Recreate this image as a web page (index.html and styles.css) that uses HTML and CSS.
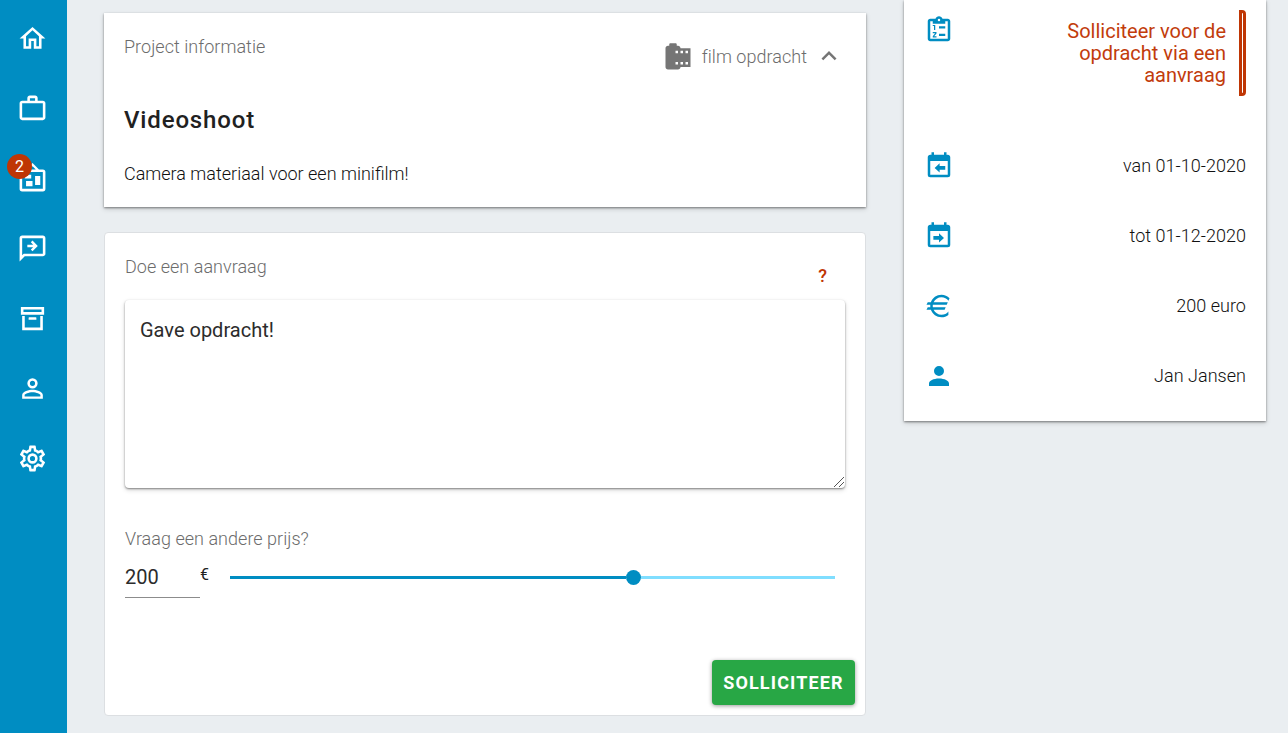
FILE: index.html
```html
<!DOCTYPE html>
<html lang="nl">
<head>
<meta charset="utf-8">
<title>Videoshoot</title>
<link rel="stylesheet" href="styles.css">
</head>
<body>
<div class="app">
  <nav class="sidebar">
    <a class="nav-item"><svg viewBox="0 0 24 24"><path d="M12 5.69L17 10.19V18H15V12H9V18H7V10.19L12 5.69M12 3L2 12H5V20H11V14H13V20H19V12H22"/></svg></a>
    <a class="nav-item"><svg viewBox="0 0 24 24"><path d="M20,6C20.58,6 21.05,6.2 21.42,6.59C21.8,7 22,7.45 22,8V19C22,19.55 21.8,20 21.42,20.41C21.05,20.8 20.58,21 20,21H4C3.42,21 2.95,20.8 2.58,20.41C2.2,20 2,19.55 2,19V8C2,7.45 2.2,7 2.58,6.59C2.95,6.2 3.42,6 4,6H8V4C8,3.42 8.2,2.95 8.58,2.58C8.95,2.2 9.42,2 10,2H14C14.58,2 15.05,2.2 15.42,2.58C15.8,2.95 16,3.42 16,4V6H20M4,8V19H20V8H4M14,6V4H10V6H14Z"/></svg></a>
    <a class="nav-item"><svg viewBox="0 0 24 24"><path d="M12.04,2.5L9.53,5H14.53L12.04,2.5M4,7V20H20V7H4M12,0L17,5V5H20A2,2 0 0,1 22,7V20A2,2 0 0,1 20,22H4A2,2 0 0,1 2,20V7A2,2 0 0,1 4,5H7V5L12,0M7,18V14H12V18H7M14,17V10H18V17H14M6,12V9H11V12H6Z"/></svg><span class="badge">2</span></a>
    <a class="nav-item"><svg viewBox="0 0 24 24"><path d="M20 2H4C2.9 2 2 2.9 2 4V22L6 18H20C21.1 18 22 17.1 22 16V4C22 2.9 21.1 2 20 2M20 16H5.2L4 17.2V4H20V16M8 9H12.5L10.7 7.2L12 5.9L16.1 10L12 14.1L10.7 12.8L12.5 11H8V9Z"/></svg></a>
    <a class="nav-item"><svg viewBox="0 0 24 24"><path d="M20 21H4V10H6V19H18V10H20V21M3 3H21V9H3V3M5 5V7H19V5M9.5 11A.5.5 0 0 0 9 11.5V13H15V11.5A.5.5 0 0 0 14.5 11Z"/></svg></a>
    <a class="nav-item"><svg viewBox="0 0 24 24"><path d="M12,4A4,4 0 0,1 16,8A4,4 0 0,1 12,12A4,4 0 0,1 8,8A4,4 0 0,1 12,4M12,6A2,2 0 0,0 10,8A2,2 0 0,0 12,10A2,2 0 0,0 14,8A2,2 0 0,0 12,6M12,13C14.67,13 20,14.33 20,17V20H4V17C4,14.33 9.33,13 12,13M12,14.9C9.03,14.9 5.9,16.36 5.9,17V18.1H18.1V17C18.1,16.36 14.97,14.9 12,14.9Z"/></svg></a>
    <a class="nav-item"><svg viewBox="0 0 24 24"><path d="M12,8A4,4 0 0,1 16,12A4,4 0 0,1 12,16A4,4 0 0,1 8,12A4,4 0 0,1 12,8M12,10A2,2 0 0,0 10,12A2,2 0 0,0 12,14A2,2 0 0,0 14,12A2,2 0 0,0 12,10M10,22C9.75,22 9.54,21.82 9.5,21.58L9.13,18.93C8.5,18.68 7.96,18.34 7.44,17.94L4.95,18.95C4.73,19.03 4.46,18.95 4.34,18.73L2.34,15.27C2.21,15.05 2.27,14.78 2.46,14.63L4.57,12.97L4.5,12L4.57,11L2.46,9.37C2.27,9.22 2.21,8.95 2.34,8.73L4.34,5.27C4.46,5.05 4.73,4.96 4.95,5.05L7.44,6.05C7.96,5.66 8.5,5.32 9.13,5.07L9.5,2.42C9.54,2.18 9.75,2 10,2H14C14.25,2 14.46,2.18 14.5,2.42L14.87,5.07C15.5,5.32 16.04,5.66 16.56,6.05L19.05,5.05C19.27,4.96 19.54,5.05 19.66,5.27L21.66,8.73C21.79,8.95 21.73,9.22 21.54,9.37L19.43,11L19.5,12L19.43,13L21.54,14.63C21.73,14.78 21.79,15.05 21.66,15.27L19.66,18.73C19.54,18.95 19.27,19.04 19.05,18.95L16.56,17.95C16.04,18.34 15.5,18.68 14.87,18.93L14.5,21.58C14.46,21.82 14.25,22 14,22H10M11.25,4L10.88,6.61C9.68,6.86 8.62,7.5 7.85,8.39L5.44,7.35L4.69,8.65L6.8,10.2C6.4,11.37 6.4,12.64 6.8,13.8L4.68,15.36L5.43,16.66L7.86,15.62C8.63,16.5 9.68,17.14 10.87,17.38L11.24,20H12.76L13.13,17.39C14.32,17.14 15.37,16.5 16.14,15.62L18.57,16.66L19.32,15.36L17.2,13.81C17.6,12.64 17.6,11.37 17.2,10.2L19.31,8.65L18.56,7.35L16.15,8.39C15.38,7.5 14.32,6.86 13.12,6.62L12.75,4H11.25Z"/></svg></a>
  </nav>
  <main class="main">
    <section class="card project">
      <header class="project-head">
        <span class="label">Project informatie</span>
        <div class="kind">
          <svg class="kind-icon" viewBox="0 0 24 24"><path d="M14 5c0-1.1-.9-2-2-2h-1V2c0-.55-.45-1-1-1H6c-.55 0-1 .45-1 1v1H4c-1.1 0-2 .9-2 2v15c0 1.1.9 2 2 2h8c1.1 0 2-.9 2-2h8V5h-8zm-2 13h-2v-2h2v2zm0-9h-2V7h2v2zm4 9h-2v-2h2v2zm0-9h-2V7h2v2zm4 9h-2v-2h2v2zm0-9h-2V7h2v2z"/></svg>
          <span class="kind-text">film opdracht</span>
          <svg class="chevron" viewBox="0 0 24 24"><path d="M7.41,15.41L12,10.83L16.59,15.41L18,14L12,8L6,14L7.41,15.41Z"/></svg>
        </div>
      </header>
      <h1 class="title">Videoshoot</h1>
      <p class="desc">Camera materiaal voor een minifilm!</p>
    </section>
    <form class="request">
      <div class="request-head"><span class="label">Doe een aanvraag</span><span class="help">?</span></div>
      <div class="message-box">
        <textarea class="message">Gave opdracht!</textarea>
        <svg class="grip" viewBox="0 0 12 12"><path d="M1 11L11 1M6 11L11 6"/></svg>
      </div>
      <div class="label price-label">Vraag een andere prijs?</div>
      <div class="price">
        <input class="price-input" value="200">
        <span class="euro">€</span>
        <div class="slider"><div class="slider-fill"></div><div class="thumb"></div><div class="slider-rest"></div></div>
      </div>
      <div class="actions"><button class="submit" type="button">SOLLICITEER</button></div>
    </form>
  </main>
  <aside class="card details">
    <div class="status">
      <svg class="icon" viewBox="0 0 24 24"><path fill-rule="evenodd" d="M19 3h-4.18C14.4 1.84 13.3 1 12 1s-2.4.84-2.82 2H5c-1.1 0-2 .9-2 2v14c0 1.1.9 2 2 2h14c1.1 0 2-.9 2-2V5c0-1.1-.9-2-2-2zM12 3a1 1 0 1 1 0 2 1 1 0 0 1 0-2zM5 5h2v2h10V5h2v14H5z"/><path d="M12 9h5v1.8h-5zM12 15h5v1.8h-5zM8 12V8.8H7V8h2v4zM7 13.5h3v1.2L8.1 17H10v.9H7v-1L8.9 14.5H7z"/></svg>
      <p class="status-text">Solliciteer voor de opdracht via een aanvraag</p>
      <i class="status-bar"></i>
    </div>
    <div class="row"><svg class="icon" viewBox="0 0 24 24"><path fill-rule="evenodd" d="M19 3H18V1H16V3H8V1H6V3H5C3.9 3 3 3.9 3 5V19A2 2 0 0 0 5 21H19A2 2 0 0 0 21 19V5C21 3.9 20.1 3 19 3M19 19H5V8H19Z"/><path d="M12.5 9.8V12H17V15H12.5V17.2L8.5 13.5Z"/></svg><span>van 01-10-2020</span></div>
    <div class="row"><svg class="icon" viewBox="0 0 24 24"><path fill-rule="evenodd" d="M19 3H18V1H16V3H8V1H6V3H5C3.9 3 3 3.9 3 5V19A2 2 0 0 0 5 21H19A2 2 0 0 0 21 19V5C21 3.9 20.1 3 19 3M19 19H5V8H19Z"/><path d="M12 9.8V12H7.5V15H12V17.2L16 13.5Z"/></svg><span>tot 01-12-2020</span></div>
    <div class="row"><svg class="icon" viewBox="0 0 24 24"><path d="M7.07,11L7,12L7.07,13H17.35L16.5,15H7.67C8.8,17.36 11.21,19 14,19C16.23,19 18.22,17.96 19.5,16.33V19.12C18,20.3 16.07,21 14,21C10.08,21 6.75,18.5 5.5,15H2L3,13H5.05L5,12L5.05,11H2L3,9H5.5C6.75,5.5 10.08,3 14,3C16.5,3 18.8,4.04 20.43,5.71L19.57,7.75C18.29,6.08 16.27,5 14,5C11.21,5 8.8,6.64 7.67,9H19.04L18.19,11H7.07Z"/></svg><span>200 euro</span></div>
    <div class="row"><svg class="icon" viewBox="0 0 24 24"><path d="M12,4A4,4 0 0,1 16,8A4,4 0 0,1 12,12A4,4 0 0,1 8,8A4,4 0 0,1 12,4M12,14C16.42,14 20,15.79 20,18V20H4V18C4,15.79 7.58,14 12,14Z"/></svg><span>Jan Jansen</span></div>
  </aside>
</div>
</body>
</html>
```
FILE: styles.css
```css
* { box-sizing: border-box; }
body {
  margin: 0;
  background: #eaeef1;
  font-family: Roboto, "Liberation Sans", sans-serif;
  font-size: 18px;
  font-weight: 400;
  color: #212121;
  overflow: hidden;
}
svg { display: block; fill: currentColor; flex: none; }
h1, p { margin: 0; }

.app { display: flex; height: 733px; align-items: flex-start; }

.sidebar {
  width: 67px;
  height: 733px;
  padding: 3px 3px 0 0;
  background: #008dc2;
  color: #fff;
  flex: none;
}
.nav-item {
  position: relative;
  display: flex;
  align-items: center;
  justify-content: center;
  height: 70px;
}
.nav-item svg { width: 31px; height: 31px; }
.badge {
  position: absolute;
  left: 7px;
  top: 11px;
  width: 25px;
  height: 25px;
  border-radius: 50%;
  background: #bf3604;
  font-size: 16px;
  line-height: 25px;
  text-align: center;
}

.main { width: 762px; margin-left: 37px; padding-top: 13px; flex: none; }
.card {
  background: #fff;
  box-shadow: 0 1px 2px rgba(0, 0, 0, .42), 0 2px 5px rgba(0, 0, 0, .16);
}
.label { color: #6c6c6c; font-weight: 300; line-height: 24px; letter-spacing: .03px; }

.project { height: 194px; padding: 22px 20px 0; }
.project-head { display: flex; justify-content: space-between; height: 70px; }
.kind { display: flex; align-items: center; height: 43px; padding-right: 2px; color: #757575; }
.kind-icon { width: 30px; height: 30px; }
.kind-text { margin-left: 9px; color: #6c6c6c; font-weight: 300; letter-spacing: .03px; }
.chevron { width: 30px; height: 30px; margin-left: 7px; margin-top: -2px; }
.title { margin-top: -1px; font-size: 24px; font-weight: 500; line-height: 32px; letter-spacing: .85px; }
.desc { margin-top: 26px; font-weight: 300; line-height: 24px; color: #111; }

.request {
  height: 484px;
  margin-top: 25px;
  padding: 22px 10px 0 20px;
  background: #fff;
  border: 1px solid #dcdfe2;
  border-radius: 4px;
}
.request-head { display: flex; justify-content: space-between; height: 45px; padding-right: 28px; }
.help { padding-top: 9px; color: #bf3604; font-weight: 500; line-height: 24px; }
.message-box { position: relative; width: 720px; }
.message {
  display: block;
  width: 720px;
  height: 188px;
  padding: 16px 15px;
  border: 0;
  border-radius: 4px;
  outline: 0;
  background: #fff;
  box-shadow: 0 1px 2px rgba(0, 0, 0, .42), 0 2px 5px rgba(0, 0, 0, .16);
  color: #2c2c2c;
  font: 400 20px/28px Roboto, "Liberation Sans", sans-serif;
  resize: none;
}
.grip {
  position: absolute;
  right: 0;
  bottom: 0;
  width: 12px;
  height: 12px;
  fill: none;
  stroke: #555;
  stroke-width: 1;
}
.price-label { margin-top: 39px; }
.price { display: flex; height: 46px; margin-top: 1px; }
.price-input {
  width: 75px;
  height: 46px;
  padding: 5px 0 0;
  border: 0;
  border-bottom: 1px solid #8c8c8c;
  background: none;
  color: #2c2c2c;
  font: 400 20px Roboto, "Liberation Sans", sans-serif;
}
.euro { width: 30px; padding-top: 13px; font-size: 16px; line-height: 20px; }
.slider { display: flex; align-items: center; width: 605px; height: 50px; }
.slider-fill { width: 396px; height: 3px; background: #008dc2; }
.thumb { width: 15px; height: 15px; border-radius: 50%; background: #008dc2; }
.slider-rest { flex: 1; height: 3px; background: #80deff; }
.actions { display: flex; justify-content: flex-end; margin-top: 62px; }
.submit {
  width: 143px;
  height: 45px;
  padding: 0;
  border: 0;
  border-radius: 4px;
  background: #28a745;
  box-shadow: 0 1px 4px rgba(0, 0, 0, .4);
  color: #fff;
  font: 700 18px Roboto, "Liberation Sans", sans-serif;
  letter-spacing: 1.15px;
}

.details { width: 362px; height: 421px; margin-left: 38px; padding: 10px 20px 0; flex: none; }
.icon { width: 30px; height: 30px; color: #008dc2; }
.status { display: flex; height: 121px; align-items: flex-start; }
.status .icon { margin-top: 5px; }
.status-text {
  width: 180px;
  margin: 10px 13px 0 auto;
  color: #c23c0c;
  font-size: 20px;
  line-height: 22px;
  text-align: right;
}
.status-bar {
  width: 7px;
  height: 86px;
  border: 3px solid #bf3604;
  border-radius: 0 4px 4px 0;
}
.row { display: flex; align-items: center; justify-content: space-between; height: 70px; font-weight: 300; color: #111; letter-spacing: .03px; }
.row span { padding-bottom: 2px; }
```
